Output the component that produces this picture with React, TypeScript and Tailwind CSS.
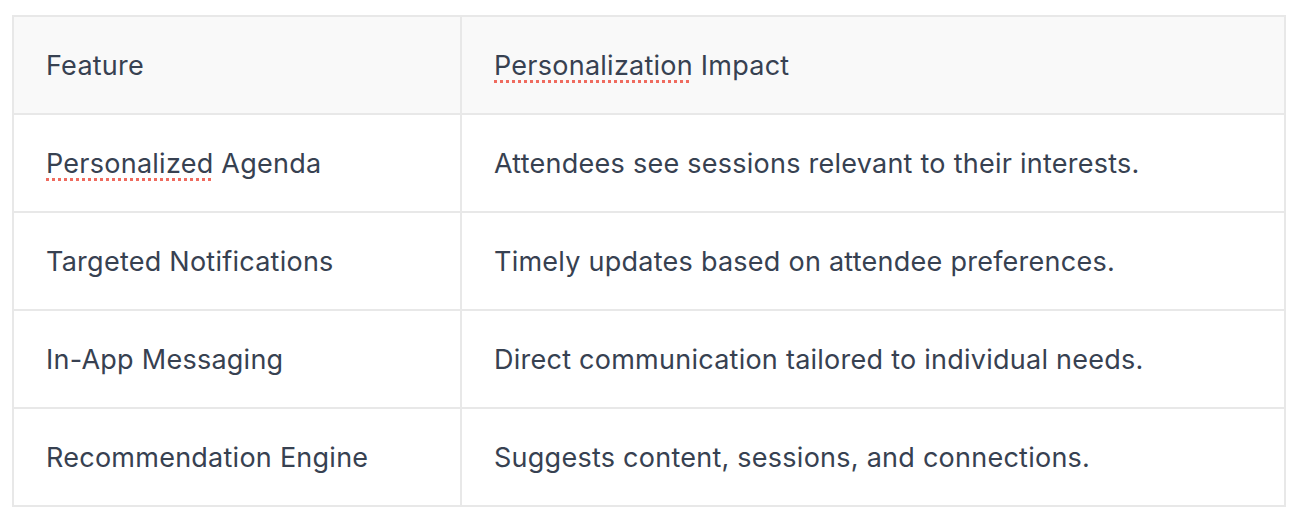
import React from 'react';

const rows = [
  { feature: 'Personalized Agenda', impact: 'Attendees see sessions relevant to their interests.', flag: 'Personalized' },
  { feature: 'Targeted Notifications', impact: 'Timely updates based on attendee preferences.' },
  { feature: 'In-App Messaging', impact: 'Direct communication tailored to individual needs.' },
  { feature: 'Recommendation Engine', impact: 'Suggests content, sessions, and connections.' },
];

// red dotted spell-check style underline
const Misspelled = ({ children }: { children: React.ReactNode }) => (
  <span className="underline decoration-dotted decoration-[#ef6b5f] decoration-[3px] underline-offset-[5px]">{children}</span>
);

export default function App() {
  return (
    <div className="min-h-screen bg-white pt-[15px] pl-[12px] pr-[12px]">
      <table
        className="w-[1274px] border-collapse border-2 border-[#e8e8e8] text-[#374151] text-[27px] tracking-[0.25px]"
        style={{ fontFamily: 'Inter, "Noto Sans", sans-serif' }}
      >
        <thead>
          <tr className="bg-[#f9f9f9] h-[98px]">
            <th className="w-[448px] border-2 border-[#e8e8e8] px-8 pt-[3px] text-left font-normal">Feature</th>
            <th className="border-2 border-[#e8e8e8] px-8 pt-[3px] text-left font-normal">
              <Misspelled>Personalization</Misspelled> Impact
            </th>
          </tr>
        </thead>
        <tbody>
          {rows.map((r) => (
            <tr key={r.feature} className="h-[98px]">
              <td className="border-2 border-[#e8e8e8] px-8 pt-[3px]">
                {r.flag ? (
                  <>
                    <Misspelled>{r.flag}</Misspelled>
                    {r.feature.slice(r.flag.length)}
                  </>
                ) : (
                  r.feature
                )}
              </td>
              <td className="border-2 border-[#e8e8e8] px-8 pt-[3px]">{r.impact}</td>
            </tr>
          ))}
        </tbody>
      </table>
    </div>
  );
}
